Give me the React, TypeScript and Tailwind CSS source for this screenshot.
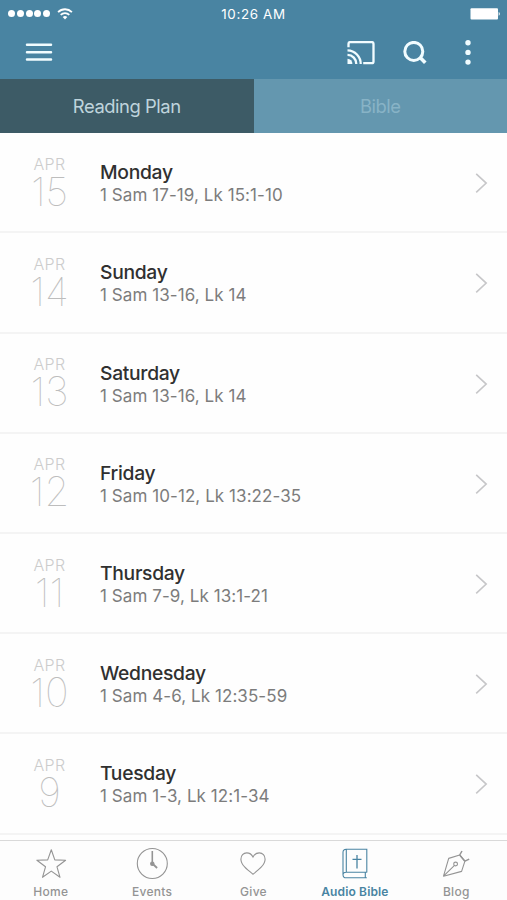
import React from 'react';

interface Reading {
    date: string;
    day: string;
    passage: string;
}

const READINGS: Reading[] = [
    { date: '15', day: 'Monday', passage: '1 Sam 17-19, Lk 15:1-10' },
    { date: '14', day: 'Sunday', passage: '1 Sam 13-16, Lk 14' },
    { date: '13', day: 'Saturday', passage: '1 Sam 13-16, Lk 14' },
    { date: '12', day: 'Friday', passage: '1 Sam 10-12, Lk 13:22-35' },
    { date: '11', day: 'Thursday', passage: '1 Sam 7-9, Lk 13:1-21' },
    { date: '10', day: 'Wednesday', passage: '1 Sam 4-6, Lk 12:35-59' },
    { date: '9', day: 'Tuesday', passage: '1 Sam 1-3, Lk 12:1-34' },
];

const StatusBar: React.FC = () => (
    <div className="relative flex h-[27px] items-center justify-between pl-2 pr-[6px] text-white">
        <div className="flex items-center gap-[7px]">
            <div className="flex gap-[1.8px]">
                {[0, 1, 2, 3, 4].map((dot) => (
                    <span key={dot} className="h-[7px] w-[7px] rounded-full bg-white" />
                ))}
            </div>
            <svg className="h-[12px] w-[16px]" viewBox="0 0 16 12" fill="none" stroke="currentColor" strokeWidth={1.8}>
                <path d="M1.1 4.1a9.8 9.8 0 0 1 13.8 0" />
                <path d="M3.7 6.8a6.1 6.1 0 0 1 8.6 0" />
                <path d="M8 11.4 5.7 9.1a3.3 3.3 0 0 1 4.6 0z" fill="currentColor" stroke="none" />
            </svg>
        </div>
        <span className="absolute inset-x-0 top-0 text-center text-[13.4px] font-normal leading-[28px] tracking-[0.65px]">
            10:26 AM
        </span>
        <svg className="h-[12px] w-[31px]" viewBox="0 0 31 12" fill="currentColor">
            <rect x="0.5" y="0.3" width="27.5" height="11.2" rx="1" />
            <path d="M28.7 4.1c1.5.4 1.5 3.2 0 3.6z" />
        </svg>
    </div>
);

const NavBar: React.FC = () => (
    <div className="flex h-[52px] items-center justify-between pl-[25px] pr-[36px] text-[#f1fcff]">
        <button title="Menu">
            <svg className="h-[20px] w-[28px]" viewBox="0 0 28 20" stroke="currentColor" strokeWidth={2.5} strokeLinecap="round">
                <path d="M2 1.7h24M2 9.3h24M2 16.6h24" />
            </svg>
        </button>
        <div className="flex items-center">
            <button className="mr-[28px]" title="Cast">
                <svg className="h-[24px] w-[28px]" viewBox="0 0 28 24" fill="none" stroke="currentColor" strokeWidth={2.3}>
                    <path d="M1.5 5.7V2.2q0-1.7 1.7-1.7h21.6q1.7 0 1.7 1.7v17.6q0 1.7-1.7 1.7h-8.6" transform="translate(0 .6)" />
                    <path d="M.5 9.3a13.5 13.5 0 0 1 13.2 13.7M.5 13.9a8.9 8.9 0 0 1 8.8 9.1" />
                    <path d="M.5 17.8a5 5 0 0 1 4.9 5.2H.5z" fill="currentColor" stroke="none" />
                </svg>
            </button>
            <button className="mr-[38px]" title="Search">
                <svg className="h-[24px] w-[24px]" viewBox="0 0 24 24" fill="none" stroke="currentColor" strokeWidth={3}>
                    <circle cx="10.8" cy="10.4" r="9" />
                    <path d="m17.1 16.6 5.2 5.2" strokeWidth={3.6} />
                </svg>
            </button>
            <button title="More">
                <svg className="h-[26px] w-[6px]" viewBox="0 0 6 26" fill="currentColor">
                    <circle cx="3" cy="2.8" r="2.7" />
                    <circle cx="3" cy="12.4" r="2.7" />
                    <circle cx="3" cy="22.1" r="2.7" />
                </svg>
            </button>
        </div>
    </div>
);

const ReadingRow: React.FC<Reading> = ({ date, day, passage }) => (
    <li className="flex h-[100.2px] shrink-0 items-center border-b-2 border-[#f4f4f4] pr-[19px] pt-[2px]">
        <div className="flex w-[99px] flex-col items-center pb-[3px]">
            <span className="text-[16px] font-light leading-[20px] tracking-[0.4px] text-[#cccccc]">APR</span>
            <span className="text-[40px] font-[100] leading-[36px] text-[#bdbdbd]">{date}</span>
        </div>
        <div className="flex flex-1 flex-col pl-px pt-[2px]">
            <span className="text-[19.3px] font-medium leading-[23px] tracking-[-0.3px] text-[#303030]">{day}</span>
            <span className="text-[17px] leading-[23px] tracking-[0.07px] text-[#7c7c7c]">{passage}</span>
        </div>
        <svg className="h-[20px] w-[13px]" viewBox="0 0 13 20" fill="none" stroke="#c7c7c9" strokeWidth={1.6}>
            <path d="m1.2.8 10 9.3-10 9.3" />
        </svg>
    </li>
);

interface TabProps {
    label: string;
    active?: boolean;
    children: React.ReactNode;
}

const Tab: React.FC<TabProps> = ({ label, active, children }) => (
    <button className={`flex flex-col items-center pt-[6px] ${active ? 'text-[#4984a2]' : 'text-[#949494]'}`}>
        <svg className="h-[34px] w-[34px]" viewBox="0 0 34 34" fill="none" stroke="currentColor" strokeWidth={1.1}>
            {children}
        </svg>
        <span className={`whitespace-nowrap text-[12px] leading-[21px] ${active ? 'font-semibold tracking-[0.15px]' : 'font-medium tracking-[0.3px]'}`}>
            {label}
        </span>
    </button>
);

const TabBar: React.FC = () => (
    <nav className="grid h-[60px] shrink-0 grid-cols-5 border-t border-[#d9d9d9] bg-[#fdfdfd]">
        <Tab label="Home">
            <path d="m17.3 2.7 3.5 10.2 10.8.3-8.6 6.6 3 10.5-8.7-6.2-8.8 6.2 3-10.5-8.6-6.6 10.8-.3z" strokeLinejoin="round" />
        </Tab>
        <Tab label="Events">
            <circle cx="17.3" cy="16.5" r="15" />
            <path d="M17.3 4v12.5" strokeWidth={1.6} />
            <path d="m17.3 16.5 4.8 4.5" strokeWidth={1.8} />
            <circle cx="17.3" cy="16.7" r="1.7" fill="currentColor" />
        </Tab>
        <Tab label="Give">
            <path d="M17 27.2C11.5 23 4.9 18 4.9 12.2c0-3.7 2.5-6.3 5.8-6.3 2.8 0 5 1.5 6.3 4.1 1.3-2.6 3.5-4.1 6.3-4.1 3.3 0 5.8 2.6 5.8 6.3 0 5.8-6.6 10.8-12.1 15z" />
        </Tab>
        <Tab label="Audio Bible" active>
            <path d="M28.8 25.5V2.2H8.2Q5 2.2 5 5.3v22.1q0 3.4 3.2 3.4h20.6M5 28q0-2.8 3.2-2.8h20.6M8.3 2.2v23M27.3 25.3v5.5" />
            <path d="M19 8v13.4M14.5 12.4h9" strokeWidth={1.3} />
        </Tab>
        <Tab label="Blog">
            <path d="m4.5 29.2 5.2-17.8 11-3.4 5.2 6.2-3.3 10.2z M4.5 29.2l11-10.9" strokeLinejoin="round" />
            <circle cx="16.6" cy="17" r="1.9" />
            <path d="m20.7 8 2.3-4M25.9 14.2l4.3-2.1M20.7 8l5.2 6.2" strokeWidth={1.5} />
        </Tab>
    </nav>
);

export default function App() {
    return (
        <div className="flex h-[900px] w-[507px] flex-col overflow-hidden bg-[#fefefe] font-['Inter',sans-serif]">
            <header className="shrink-0 bg-[#4984a2]">
                <StatusBar />
                <NavBar />
                <div className="grid h-[53.5px] grid-cols-2 text-[18.4px] leading-[54px] tracking-[-0.45px]">
                    <button className="bg-[#3d5b66] text-[#bfd4dc]">Reading Plan</button>
                    <button className="bg-[#6497af] text-[#88b3c6]">Bible</button>
                </div>
            </header>
            <ul className="flex min-h-0 flex-1 flex-col overflow-hidden pt-[0.7px]">
                {READINGS.map((reading) => (
                    <ReadingRow key={reading.date} {...reading} />
                ))}
            </ul>
            <TabBar />
        </div>
    );
}
